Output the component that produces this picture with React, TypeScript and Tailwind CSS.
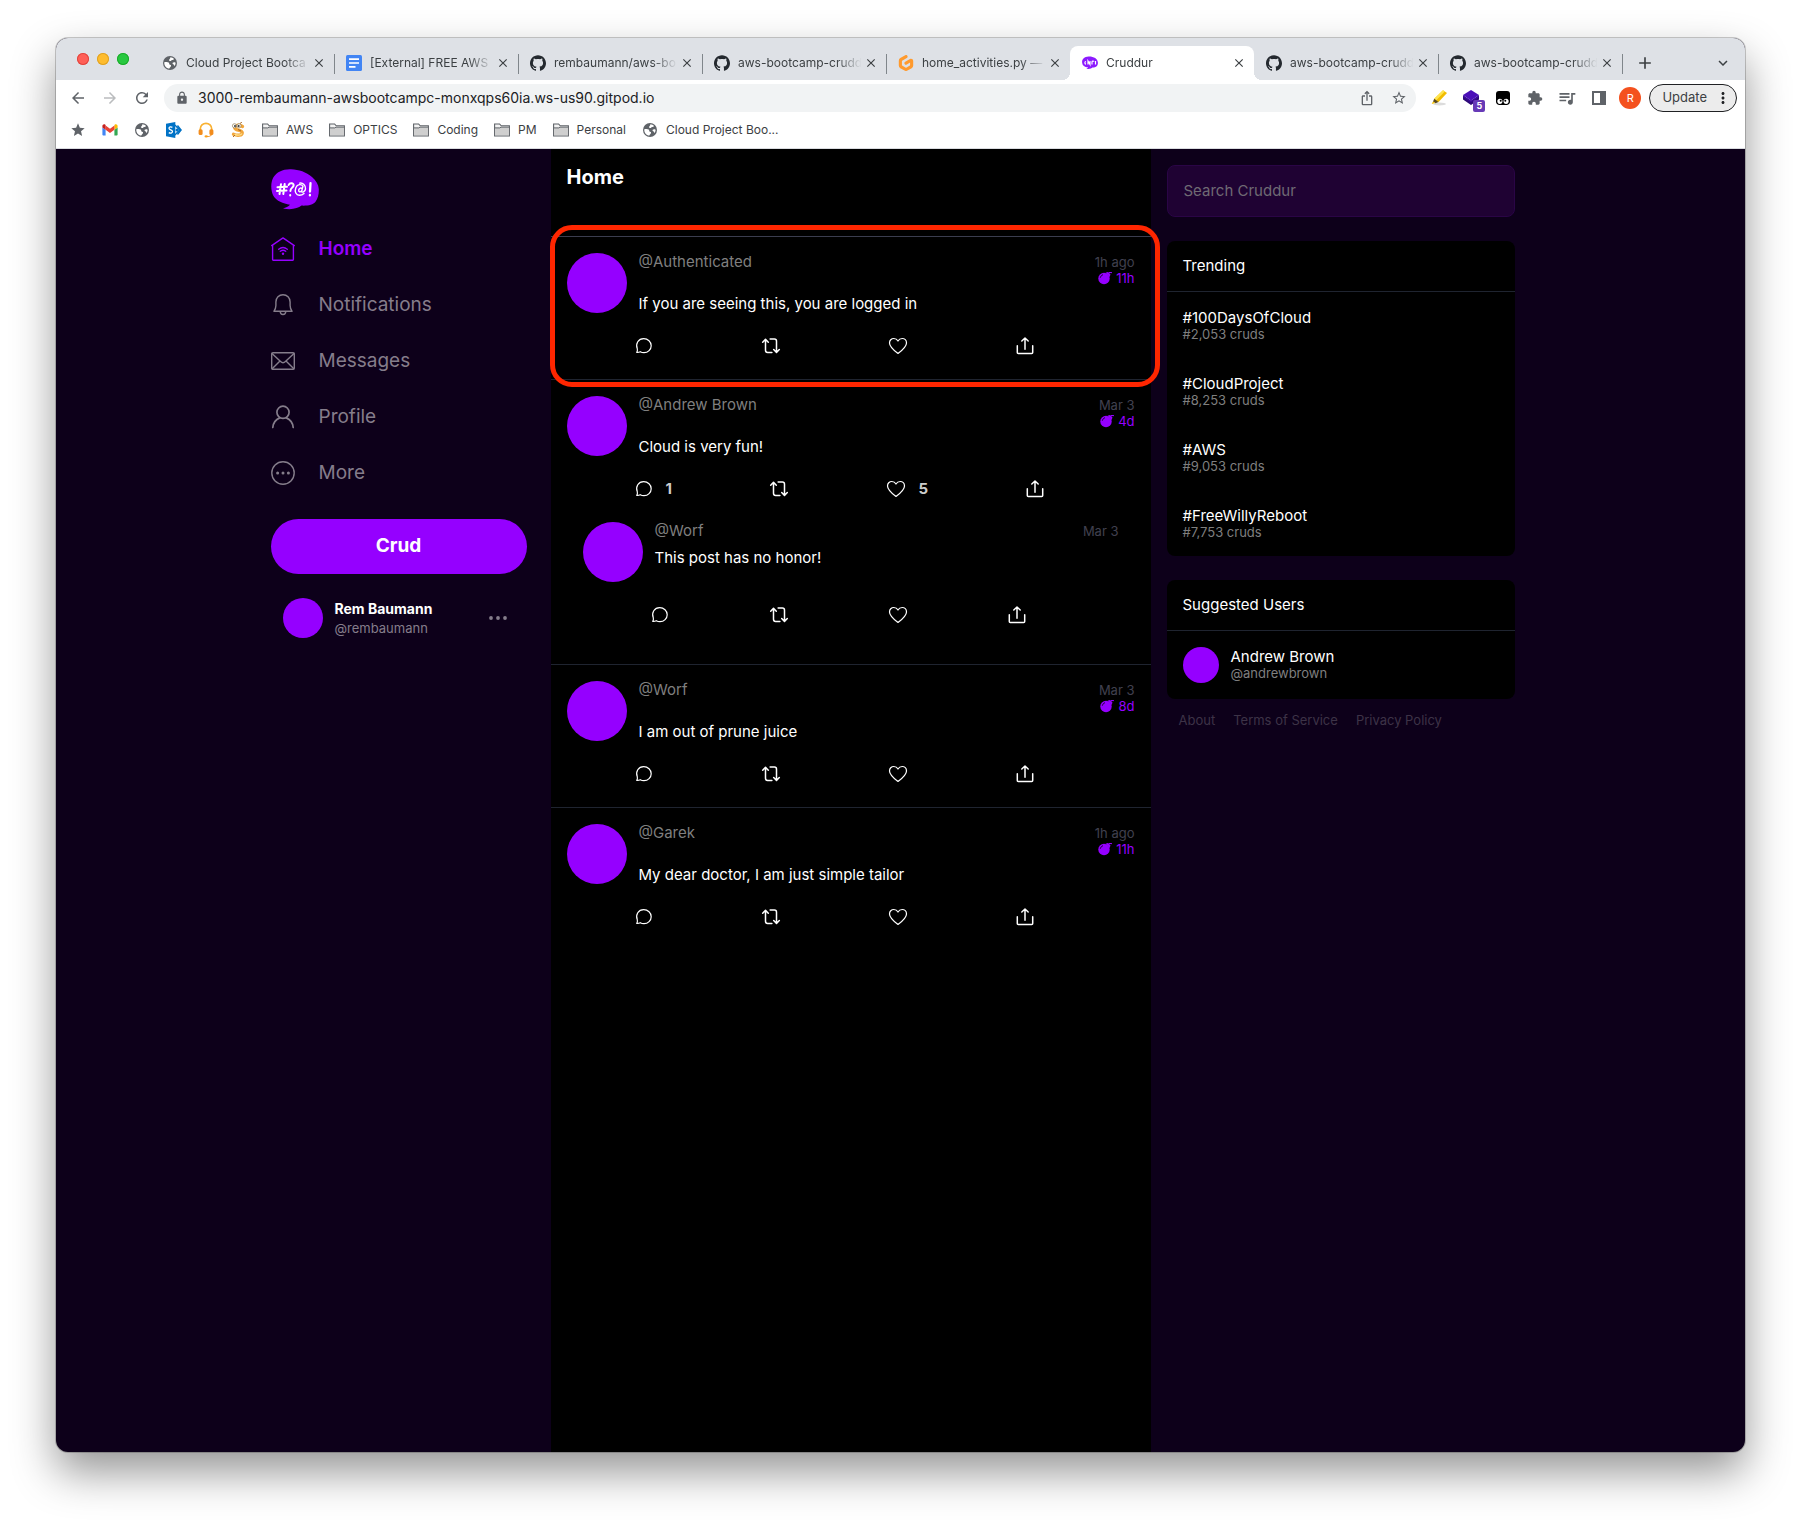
import React from "react";
import {
  MdAdd,
  MdArrowBack,
  MdArrowForward,
  MdClose,
  MdExpandMore,
  MdExtension,
  MdIosShare,
  MdLock,
  MdMoreVert,
  MdQueueMusic,
  MdRefresh,
  MdStar,
  MdStarBorder,
} from "react-icons/md";
import { SiGithub, SiGitpod } from "react-icons/si";

/* ---------- browser icons ---------- */

function GlobeIcon() {
  return (
    <svg viewBox="0 0 16 16" className="size-4">
      <circle cx="8" cy="8" r="7" fill="#5f6368" />
      <path d="M2.300 7.200c1.500-.3 3.700-.2 4.500.5.700.7.200 1.800 1.200 2 1.200.2 1.300.8.800 1.700-.4.800-1.300 1-1.400 2.200C4.400 13.400 2 10.600 2.300 7.200z" fill="#fff" />
      <path d="M8.300 2.300c1.600.1 2.800.8 3.700 1.700-.3.700-1 1-1.900.9-.9 0-.8 1-1.700 1.100-1 0-1.500-.5-1.200-1.300.3-.9 1.300-1 1.100-2.400z" fill="#fff" />
      <path d="M13.600 7.700c-.9-.6-2.300-.6-2.900.1-.5.700.1 1.500.9 1.700.7.200.6.900.5 1.700 1-.9 1.500-2.100 1.500-3.500z" fill="#fff" />
    </svg>
  );
}

function DocsIcon() {
  return (
    <svg viewBox="0 0 16 16" className="size-4">
      <rect width="16" height="16" rx="1.5" fill="#4285f4" />
      <path d="M3 4.100h10M3 8h10M3 11.900h6.500" stroke="#fff" strokeWidth="1.700" />
    </svg>
  );
}

function BubbleIcon({ className }: { className: string }) {
  return (
    <svg viewBox="0 0 48 41" className={className} aria-hidden="true">
      <path
        d="M20 .3C28 .6 35 3 41 8c4 3.500 6.600 7.500 6.800 12 .2 5-.8 9.500-3.300 12.800-2.500 3.300-7.500 4-14 3.800-3.500 2.800-10 4.700-18.500 2.900 2.800-.7 5.500-2 7-3.700C12 34.500 5.500 32 2.500 27-.3 22-.6 14 2.300 8.600 5.600 3 12 0 20 .3z"
        fill="#9500ff"
      />
      <g stroke="#fff" strokeWidth="2" fill="none" strokeLinecap="round" strokeLinejoin="round">
        <path d="M10 15.200 8.500 25M13.700 15 12.300 25M6.500 18.300l9.500-.5M6 22l9.500-.5" />
        <path d="M17.600 16c1-2.500 5.400-2.300 5 .5-.3 2-3.200 2.600-3.200 5.400M19.200 26v.4" />
        <path d="M32 17.300c-1.500-2.600-5.700-2.300-7.200 1.400-1.500 4 .4 7.500 3.600 7.500 1.800 0 3.500-.8 4.600-1.800M31.800 17.800l-1.200 4.700c.9 1.400 3.600 0 3.900-2.600.4-3.800-2.700-6.300-5.800-5.800M31 19.600c-.8-1.200-2.800-.6-3.300 1.400-.4 2 1.700 2.500 2.900.8" strokeWidth="1.400" />
        <path d="M39.500 14.200 39 22.500M38.900 26v.4" strokeWidth="2.300" />
      </g>
    </svg>
  );
}

function TabBubbleIcon() {
  return (
    <svg viewBox="0 0 16 16" className="size-4">
      <path
        d="M6.500 1.500c5-.2 9.200 2 9.400 6.100.1 3.200-1.500 4.900-5.400 5-1.100 1-3 1.700-6.200 1.200.9-.2 1.600-.7 1.900-1.300C2.500 12 .2 10.400.1 7.400 0 3.800 2.500 1.600 6.500 1.500z"
        fill="#8c1aff"
      />
      <path d="M4 6.500c-1.500 0-1.500 2.700 0 2.700M6 9.500V6l2 3.500V6M10 9.500V6.800c.2-1 1.700-1 1.800 0M13.500 6v3.500" stroke="#fff" strokeWidth="1.200" fill="none" />
    </svg>
  );
}

function FolderIcon() {
  return (
    <svg viewBox="0 0 16 14" className="h-3.5 w-4 shrink-0">
      <path d="M.6 12.900V1h5l1.600 1.800h8.200v10.100z" fill="#f3f3f3" stroke="#5f6368" strokeWidth="1.100" />
      <path d="M1 12.400V4.900h4.800l1.200-.8h8v8.300z" fill="#cfcfcf" />
      <path d="M.6 4.900h5.200l1.200-.8h8.400" fill="none" stroke="#5f6368" />
    </svg>
  );
}

function GmailIcon() {
  return (
    <svg viewBox="0 0 16 12" className="h-3 w-4">
      <path d="M1.500 11.500H3.600V5.800L.4 3.400v7c0 .6.500 1.100 1.100 1.100z" fill="#4285f4" />
      <path d="M12.400 11.500h2.100c.6 0 1.100-.5 1.100-1.100v-7l-3.200 2.400z" fill="#34a853" />
      <path d="M12.400 1.400v4.400l3.200-2.400V2c0-1.500-1.600-2.300-2.800-1.400z" fill="#fbbc04" />
      <path d="M3.600 5.800V1.400L8 4.700l4.400-3.300v4.400L8 9.100z" fill="#ea4335" />
      <path d="M.4 2v1.400l3.200 2.400V1.400l-.4-.8C2 -.3.400.5.400 2z" fill="#c5221f" />
    </svg>
  );
}

function SharepointIcon() {
  return (
    <svg viewBox="0 0 16 16" className="size-4">
      <path d="M9 3l4.500 5L9 13M11.500 3.500 15.200 8l-3.700 4.500" fill="none" stroke="#0072c6" strokeWidth="1.300" />
      <circle cx="11" cy="8" r="1.500" fill="#0072c6" />
      <path d="M0 1.700 9.300 0v16L0 14.300z" fill="#0072c6" />
      <path d="M6.400 5.400C5 4.600 3 4.800 3 6.300c0 1.600 3.500 1.500 3.500 3.300 0 1.600-2.200 1.900-3.700 1" fill="none" stroke="#fff" strokeWidth="1.300" />
    </svg>
  );
}

function HeadsetIcon() {
  return (
    <svg viewBox="0 0 16 16" className="size-4">
      <path d="M2.300 9V7a5.700 5.700 0 0 1 11.400 0v2" fill="none" stroke="#f9b233" strokeWidth="1.700" />
      <rect x=".6" y="7.300" width="4" height="5.700" rx="1.500" fill="#f28c1c" />
      <rect x="11.400" y="7.300" width="4" height="5.700" rx="1.500" fill="#f28c1c" />
      <path d="M13.500 12.500c-.3 1.500-2 2-4.500 2" fill="none" stroke="#f28c1c" strokeWidth="1.100" />
      <ellipse cx="8.200" cy="14.400" rx="1.700" ry="1.100" fill="#f9a11b" />
    </svg>
  );
}

function SnakeIcon() {
  return (
    <svg viewBox="0 0 16 16" className="size-4">
      <path d="M12.500 4.500C9 2.500 4.500 3 4.800 6c.3 2.500 7.400 1.700 7.400 4.700 0 2.800-4.700 3.300-8.700 1.600" fill="none" stroke="#f2a63b" strokeWidth="3.400" strokeLinecap="round" />
      <path d="M12 11.500c-.8 1.500-4 2-7.500 1" fill="none" stroke="#fde08a" strokeWidth="1.400" />
      <circle cx="4.500" cy="3.800" r="2.100" fill="#fff" stroke="#8f7b55" strokeWidth=".7" />
      <circle cx="9" cy="3.800" r="2.100" fill="#fff" stroke="#8f7b55" strokeWidth=".7" />
      <circle cx="5" cy="4" r="1" fill="#333" />
      <circle cx="8.700" cy="4" r="1" fill="#333" />
      <path d="M10 1.500 12 0M8 7.500l3 1.500M5 13l-2 2" stroke="#a2601c" strokeWidth=".9" />
    </svg>
  );
}

function HighlighterIcon() {
  return (
    <svg viewBox="0 0 16 16" className="size-4">
      <ellipse cx="8.500" cy="14" rx="6.500" ry="1.500" fill="#dcdcdc" />
      <path d="M12 .2 16 3 7.300 12.200 3 9z" fill="#f2bd00" />
      <path d="M12 .2 13.800 1.500 5 10.500 3 9z" fill="#ffe54f" />
      <path d="M3.300 8.800 7.500 12l-3 1.200L2 11.500z" fill="#5a4a1a" />
      <path d="M2 11.500l2.300 1.500-3.600 1z" fill="#f8c400" />
    </svg>
  );
}

function CubeIcon() {
  return (
    <svg viewBox="0 0 16 16" className="size-4">
      <path d="M8 0 16 5 8 10.500 0 5z" fill="#4a0fb8" />
      <path d="M0 6v3.500L8 15l8-5.500V6l-8 5z" fill="#2d0a78" />
      <path d="M0 5l8 5.500L16 5v2l-8 5.500L0 7z" fill="#3b0a9c" />
    </svg>
  );
}

function MaskIcon() {
  return (
    <svg viewBox="0 0 16 16" className="size-4">
      <path d="M4 1h8a3 3 0 0 1 3 3v7.500c0 2-1.500 3.500-3.500 3.500h-7C2.500 15 1 13.500 1 11.500V4a3 3 0 0 1 3-3z" fill="#000" />
      <path d="M2.300 11.200c0-1.500 1-2.500 2.600-2.500s2.600 1 2.600 2.500c0 1.600-1 2.800-2.600 2.800s-2.600-1.200-2.600-2.800zM8.500 11.200c0-1.500 1-2.500 2.600-2.500s2.600 1 2.600 2.500c0 1.600-1 2.800-2.600 2.800s-2.600-1.200-2.600-2.800z" fill="#fff" />
      <circle cx="5.700" cy="10.700" r="1" fill="#000" />
      <circle cx="10.300" cy="10.700" r="1" fill="#000" />
    </svg>
  );
}

function SidePanelIcon() {
  return (
    <svg viewBox="0 0 16 16" className="size-4">
      <path d="M1 1h14v14H1zM3 3v10h6V3z" fill="#5f6368" fillRule="evenodd" />
    </svg>
  );
}

/* ---------- app icons ---------- */

const line = { fill: "none", stroke: "currentColor", strokeLinejoin: "round", strokeLinecap: "round" } as const;

function HomeIcon() {
  return (
    <svg viewBox="0 0 24 24" className="size-6" {...line} strokeWidth="1.400">
      <path d="M.7 8.600 12 .9l11.300 7.700M1.600 8v14.600c0 .4.300.7.700.7h19.400c.4 0 .7-.3.700-.7V8" />
      <path d="M7.700 12.300c2.600-2.200 6-2.200 8.600 0M9.300 14.300c1.600-1.300 3.800-1.300 5.400 0" />
      <circle cx="12" cy="16.800" r="1.200" fill="currentColor" stroke="none" />
    </svg>
  );
}
function BellIcon() {
  return (
    <svg viewBox="0 0 24 24" className="size-6" {...line} strokeWidth="1.400">
      <path d="M2.900 18.300h18.200c-1.300-1.800-2-3.500-2-5.800V9C19.100 4.900 16 1.800 12 1.800S4.900 4.900 4.900 9v3.500c0 2.300-.7 4-2 5.800zM9.200 18.500c.2 4 5.400 4 5.600 0" />
    </svg>
  );
}
function MailIcon() {
  return (
    <svg viewBox="0 0 24 24" className="size-6" {...line} strokeWidth="1.400">
      <rect x=".7" y="3.700" width="22.600" height="16.600" rx="1.300" />
      <path d="M1 4.500l8.600 8c1.500 1.500 3.300 1.500 4.800 0l8.600-8M1.200 19.800l7.800-7.700M22.800 19.800 15 12.100" />
    </svg>
  );
}
function UserIcon() {
  return (
    <svg viewBox="0 0 24 24" className="size-6" {...line} strokeWidth="1.700">
      <circle cx="12" cy="7.300" r="6.100" />
      <path d="M1.800 22.500c.4-4.800 3.200-8 6.900-9.600M22.200 22.500c-.4-4.800-3.200-8-6.900-9.600" />
    </svg>
  );
}
function MoreIcon() {
  return (
    <svg viewBox="0 0 24 24" className="size-6" {...line} strokeWidth="1.400">
      <circle cx="12" cy="12" r="11.200" />
      <g fill="currentColor" stroke="none">
        <circle cx="6.600" cy="12" r="1.500" />
        <circle cx="12" cy="12" r="1.500" />
        <circle cx="17.400" cy="12" r="1.500" />
      </g>
    </svg>
  );
}

function ReplyIcon() {
  return (
    <svg viewBox="0 0 20 20" className="size-5" {...line} strokeWidth="1.200">
      <path d="M2.700 16.400c.9-1 .9-2 .6-3.500C1.200 7.500 4.500 2.700 9.700 2.700c4.200 0 7.500 3.200 7.500 7s-3.200 7-7.200 7c-1.500 0-2.600-.3-3.700-1-1.100.6-2.300.9-3.600.7z" />
    </svg>
  );
}
function RepostIcon() {
  return (
    <svg viewBox="0 0 20 20" className="size-5" {...line} strokeWidth="1.500">
      <path d="M4.500 4v10.300c0 1.200.9 2.100 2.100 2.100h4.300M1.700 6.200l2.800-3 2.800 3M15.500 15.600V5.200c0-1.200-.9-2.100-2.100-2.100H9.100M12.700 13.500l2.800 3 2.800-3" />
    </svg>
  );
}
function HeartIcon() {
  return (
    <svg viewBox="0 0 20 20" className="size-5" {...line} strokeWidth="1.200">
      <path d="M10 17.500C5.500 14 1.500 10.700 1.500 6.900c0-2.500 1.900-4.400 4.300-4.400 1.800 0 3.300.9 4.200 2.500.9-1.600 2.400-2.500 4.200-2.500 2.400 0 4.300 1.900 4.300 4.400 0 3.800-4 7.100-8.500 10.600z" />
    </svg>
  );
}
function ShareIcon() {
  return (
    <svg viewBox="0 0 20 20" className="size-5" {...line} strokeWidth="1.500">
      <path d="M2.300 9.700v6.700c0 .6.400 1 1 1h13.400c.6 0 1-.4 1-1V9.700M10 13.300V2.500M6.800 5 10 2l3.200 3" />
    </svg>
  );
}
function BombIcon() {
  return (
    <svg viewBox="0 0 14 14" className="size-3.5" aria-hidden="true">
      <circle cx="6" cy="6.500" r="5.700" fill="#9500ff" />
      <path d="M7.500.8 9.700 0 12.500 2.400 11.500 5z" fill="#9500ff" />
      <path d="M10.500 1.400C11.300.2 12.300.2 13.900.5" stroke="#9500ff" strokeWidth="1.300" fill="none" />
      <path d="M2.300 5.700c.4-1.500 1.300-2.500 2.700-3" stroke="#000" strokeWidth=".8" fill="none" />
    </svg>
  );
}

/* ---------- browser chrome ---------- */

type Tab = { title: string; icon: React.ReactNode; active?: boolean };

const github = <SiGithub className="size-4 text-[#24292f]" />;

const tabs: Tab[] = [
  { title: "Cloud Project Bootca", icon: <GlobeIcon /> },
  { title: "[External] FREE AWS", icon: <DocsIcon /> },
  { title: "rembaumann/aws-bo", icon: github },
  { title: "aws-bootcamp-crudd", icon: github },
  { title: "home_activities.py —", icon: <SiGitpod className="size-4 text-[#ff9a2e]" /> },
  { title: "Cruddur", icon: <TabBubbleIcon />, active: true },
  { title: "aws-bootcamp-crudd", icon: github },
  { title: "aws-bootcamp-crudd", icon: github },
];

function TabItem({ tab, divider }: { tab: Tab; divider: boolean }) {
  return (
    <div
      className={
        tab.active
          ? "relative flex h-[34px] w-[184px] min-w-0 items-center rounded-t-lg bg-white pl-3 pr-2 before:absolute before:bottom-0 before:-left-2 before:size-2 before:bg-[radial-gradient(circle_at_0_0,transparent_8px,white_8px)] after:absolute after:bottom-0 after:-right-2 after:size-2 after:bg-[radial-gradient(circle_at_100%_0,transparent_8px,white_8px)]"
          : "relative flex h-[34px] w-[184px] min-w-0 items-center pl-3 pr-2"
      }
    >
      <button type="button" className="flex min-w-0 flex-1 items-center gap-2 text-left">
        <span className="shrink-0">{tab.icon}</span>
        <span className="min-w-0 flex-1 whitespace-nowrap text-xs text-[#3c4043] [mask-image:linear-gradient(to_right,black_78%,transparent_98%)]">
          {tab.title}
        </span>
      </button>
      <button type="button" aria-label="Close tab" className="shrink-0 text-[#3c4043]">
        <MdClose className="size-3.5" />
      </button>
      {divider && <span className="absolute -right-px top-2 h-5 w-px bg-[#80868b]" />}
    </div>
  );
}

const bookmarkIcons = [
  { label: "Favorites", icon: <MdStar className="size-4 text-[#5f6368]" /> },
  { label: "Gmail", icon: <GmailIcon /> },
  { label: "Website", icon: <GlobeIcon /> },
  { label: "SharePoint", icon: <SharepointIcon /> },
  { label: "Support", icon: <HeadsetIcon /> },
  { label: "Python", icon: <SnakeIcon /> },
];

function BrowserChrome() {
  return (
    <header className="text-[#3c4043]">
      <div className="flex h-[42px] items-end bg-[#dee1e6]">
        <div className="flex h-[42px] w-[94px] shrink-0 items-center gap-2 pl-[21px]">
          <span className="size-3 rounded-full bg-[#ff5f57] ring-1 ring-inset ring-[#e0443e]" />
          <span className="size-3 rounded-full bg-[#febc2e] ring-1 ring-inset ring-[#dea123]" />
          <span className="size-3 rounded-full bg-[#28c840] ring-1 ring-inset ring-[#1aab29]" />
        </div>
        {tabs.map((tab, i) => (
          <TabItem key={i} tab={tab} divider={!tab.active && !tabs[i + 1]?.active} />
        ))}
        <button type="button" aria-label="New tab" className="ml-[13px] flex h-[34px] items-center">
          <MdAdd className="size-5" />
        </button>
        <button type="button" aria-label="Search tabs" className="ml-auto mr-[13px] flex h-[34px] items-center">
          <MdExpandMore className="size-[18px]" />
        </button>
      </div>

      <div className="flex h-9 items-center bg-white pl-[13px] pr-2 text-[#5f6368]">
        <div className="flex items-center gap-3.5">
          <button type="button" aria-label="Back"><MdArrowBack className="size-[18px]" /></button>
          <button type="button" aria-label="Forward"><MdArrowForward className="size-[18px] text-[#babcbe]" /></button>
          <button type="button" aria-label="Reload"><MdRefresh className="size-[18px]" /></button>
        </div>
        <div className="ml-[13px] flex h-7 min-w-0 flex-1 items-center rounded-full bg-[#f1f3f4] pl-[11px] pr-[9px]">
          <MdLock className="size-3.5 shrink-0" />
          <input
            aria-label="Address"
            defaultValue="3000-rembaumann-awsbootcampc-monxqps60ia.ws-us90.gitpod.io"
            className="ml-[9px] min-w-0 flex-1 bg-transparent text-sm text-[#202124] outline-none"
          />
          <button type="button" aria-label="Share page"><MdIosShare className="size-4" /></button>
          <button type="button" aria-label="Bookmark page" className="ml-4"><MdStarBorder className="size-4" /></button>
        </div>
        <div className="ml-[15px] flex items-center gap-4">
          <button type="button" aria-label="Highlighter"><HighlighterIcon /></button>
          <button type="button" aria-label="Extension, 5 alerts" className="relative">
            <CubeIcon />
            <span className="absolute -bottom-1.5 -right-1.5 flex h-3 w-3 items-center justify-center rounded-xs bg-[#673ab7] text-[9px] font-bold text-white">5</span>
          </button>
          <button type="button" aria-label="Mask"><MaskIcon /></button>
          <button type="button" aria-label="Extensions"><MdExtension className="size-4" /></button>
          <button type="button" aria-label="Media"><MdQueueMusic className="size-4 scale-125" /></button>
          <button type="button" aria-label="Side panel"><SidePanelIcon /></button>
        </div>
        <button type="button" aria-label="Account" className="ml-3 flex size-[22px] items-center justify-center rounded-full bg-[#f4511e] text-[11px] text-white">R</button>
        <button type="button" className="ml-2 flex h-7 items-center justify-between gap-[7px] rounded-full border border-[#202124] bg-[#ececec] pl-3 pr-1 text-[13px] text-[#3c4043]">
          Update
          <MdMoreVert className="size-[18px] text-[#202124]" />
        </button>
      </div>

      <nav aria-label="Bookmarks" className="flex h-[33px] items-center border-b border-[#dadce0] bg-white pl-3.5 pb-1 text-xs">
        <div className="flex items-center gap-4">
          {bookmarkIcons.map((b) => (
            <a key={b.label} href="#" aria-label={b.label}>{b.icon}</a>
          ))}
          {["AWS", "OPTICS", "Coding", "PM", "Personal"].map((name) => (
            <a key={name} href="#" className="flex items-center gap-2">
              <FolderIcon />
              {name}
            </a>
          ))}
          <a href="#" className="flex items-center gap-2">
            <GlobeIcon />
            Cloud Project Boo...
          </a>
        </div>
      </nav>
    </header>
  );
}

/* ---------- left column ---------- */

const navItems = [
  { label: "Home", icon: <HomeIcon />, active: true },
  { label: "Notifications", icon: <BellIcon /> },
  { label: "Messages", icon: <MailIcon /> },
  { label: "Profile", icon: <UserIcon /> },
  { label: "More", icon: <MoreIcon /> },
];

function Sidebar() {
  return (
    <nav aria-label="Main" className="w-[280px] shrink-0 pr-6">
      <a href="#" aria-label="Cruddur" className="flex h-[72px] items-center pt-2">
        <BubbleIcon className="h-[41px] w-12" />
      </a>
      {navItems.map((item) => (
        <a
          key={item.label}
          href="#"
          className={
            item.active
              ? "flex h-14 items-center gap-6 text-[19px] font-semibold text-[#9500ff]"
              : "flex h-14 items-center gap-6 text-[19px] text-[#857d8b]"
          }
        >
          {item.icon}
          {item.label}
        </a>
      ))}
      <button type="button" className="mt-[18px] h-[55px] w-full rounded-full bg-[#9500ff] text-[19px] font-bold text-white">
        Crud
      </button>
      <button type="button" className="mt-6 flex w-full items-center gap-3 pl-3 pr-5 text-left">
        <span className="size-10 shrink-0 rounded-full bg-[#9500ff]" />
        <span className="flex-1">
          <span className="block text-sm leading-5 font-bold text-white">Rem Baumann</span>
          <span className="block text-[13px] leading-[18px] text-[#857d8b]">@rembaumann</span>
        </span>
        <svg viewBox="0 0 18 4" className="h-1 w-[18px]" fill="#857d8b">
          <circle cx="2" cy="2" r="1.900" />
          <circle cx="9" cy="2" r="1.900" />
          <circle cx="16" cy="2" r="1.900" />
        </svg>
      </button>
    </nav>
  );
}

/* ---------- feed ---------- */

type Post = {
  handle: string;
  message: string;
  time: string;
  expires?: string;
  replies?: number;
  likes?: number;
  thread?: Post[];
  highlighted?: boolean;
};

const posts: Post[] = [
  { handle: "@Authenticated", message: "If you are seeing this, you are logged in", time: "1h ago", expires: "11h", highlighted: true },
  {
    handle: "@Andrew Brown",
    message: "Cloud is very fun!",
    time: "Mar 3",
    expires: "4d",
    replies: 1,
    likes: 5,
    thread: [{ handle: "@Worf", message: "This post has no honor!", time: "Mar 3" }],
  },
  { handle: "@Worf", message: "I am out of prune juice", time: "Mar 3", expires: "8d" },
  { handle: "@Garek", message: "My dear doctor, I am just simple tailor", time: "1h ago", expires: "11h" },
];

function Action({ label, icon, count }: { label: string; icon: React.ReactNode; count?: number }) {
  return (
    <div className="flex flex-auto">
      <button type="button" aria-label={label} className="flex items-center gap-3 text-white">
        {icon}
        {count !== undefined && <span className="text-[15px] font-bold text-[#cccccc]">{count}</span>}
      </button>
    </div>
  );
}

function PostBody({ post, nested }: { post: Post; nested?: boolean }) {
  return (
    <>
      <div className="flex gap-3">
        <span className="size-[60px] shrink-0 rounded-full bg-[#9500ff]" />
        <div className="min-w-0 flex-1">
          <div className="flex items-start justify-between">
            <a href="#" className="text-[15px] leading-[18px] text-[#7f7f7f]">{post.handle}</a>
            <div className="text-right text-[13px]">
              <div className="leading-[18px] text-[#40404f]">{post.time}</div>
              {post.expires && (
                <div className="flex items-center justify-end gap-1 leading-[15px] text-[#9500ff]">
                  <BombIcon />
                  {post.expires}
                </div>
              )}
            </div>
          </div>
          <p className="mt-2 text-[15px] leading-5 text-white">{post.message}</p>
        </div>
      </div>
      <div className={nested ? "-mr-2 ml-[67px] mt-[22px] flex h-[22px] items-center" : "-mr-2 ml-[67px] mt-[21px] flex h-[22px] items-center"}>
        <Action label="Reply" icon={<ReplyIcon />} count={post.replies} />
        <Action label="Repost" icon={<RepostIcon />} />
        <Action label="Like" icon={<HeartIcon />} count={post.likes} />
        <Action label="Share" icon={<ShareIcon />} />
      </div>
    </>
  );
}

function Feed() {
  return (
    <main className="w-[600px] shrink-0 bg-black">
      <h1 className="h-[87px] p-4 text-xl leading-6 font-bold text-white">Home</h1>
      {posts.map((post, i) => (
        <article
          key={i}
          className={
            post.highlighted
              ? "relative border-t border-[#3b3d4f] px-4 pt-4 pb-[22px]"
              : "border-t border-[#1f2430] px-4 pt-4 pb-[22px]"
          }
        >
          <PostBody post={post} />
          {post.thread && (
            <div className="px-4 pt-[22px] pb-4">
              {post.thread.map((reply) => (
                <PostBody key={reply.handle} post={reply} nested />
              ))}
            </div>
          )}
          {post.highlighted && (
            <span className="pointer-events-none absolute -top-3 -right-[9px] -bottom-2 -left-px z-10 rounded-[22px] border-[5px] border-[#ff2600]" />
          )}
        </article>
      ))}
    </main>
  );
}

/* ---------- right column ---------- */

const trends = [
  { tag: "#100DaysOfCloud", count: "#2,053 cruds" },
  { tag: "#CloudProject", count: "#8,253 cruds" },
  { tag: "#AWS", count: "#9,053 cruds" },
  { tag: "#FreeWillyReboot", count: "#7,753 cruds" },
];

function Panel({ title, children }: { title: string; children: React.ReactNode }) {
  return (
    <section className="mt-6 rounded-lg bg-black">
      <h2 className="border-b border-[#1f2430] px-4 py-[15px] text-[15px] leading-5 text-white">{title}</h2>
      {children}
    </section>
  );
}

function RightRail() {
  return (
    <aside className="w-[380px] shrink-0 px-4 pt-4">
      <input
        type="search"
        aria-label="Search Cruddur"
        placeholder="Search Cruddur"
        className="block h-[52px] w-full rounded-lg border border-[#2a0546] bg-[#1f0233] px-4 pb-0.5 text-[15px] text-white outline-none placeholder:text-[#6f6a73]"
      />
      <Panel title="Trending">
        {trends.map((t) => (
          <a key={t.tag} href="#" className="block p-4">
            <span className="block text-[15px] leading-[19px] text-white">{t.tag}</span>
            <span className="block text-[13px] leading-[15px] text-[#7f7f7f]">{t.count}</span>
          </a>
        ))}
      </Panel>
      <Panel title="Suggested Users">
        <a href="#" className="flex gap-3 p-4">
          <span className="size-9 shrink-0 rounded-full bg-[#9500ff]" />
          <span>
            <span className="block text-[15px] leading-[19px] text-white">Andrew Brown</span>
            <span className="block text-[13px] leading-[15px] text-[#7f7f7f]">@andrewbrown</span>
          </span>
        </a>
      </Panel>
      <footer className="flex gap-[18px] px-3 pt-[11px] text-[13px] leading-5 text-[#3d3347]">
        <a href="#">About</a>
        <a href="#">Terms of Service</a>
        <a href="#">Privacy Policy</a>
      </footer>
    </aside>
  );
}

export default function App() {
  return (
    <div className="flex min-h-screen flex-col bg-white px-14 pt-[38px] pb-[75px] font-['Inter',sans-serif]">
      <div className="flex flex-1 flex-col overflow-hidden rounded-xl bg-[#0d001a] shadow-[0_0_0_1px_rgba(0,0,0,0.2),0_20px_44px_rgba(0,0,0,0.42)]">
        <BrowserChrome />
        <div className="mx-auto flex flex-1">
          <Sidebar />
          <Feed />
          <RightRail />
        </div>
      </div>
    </div>
  );
}
